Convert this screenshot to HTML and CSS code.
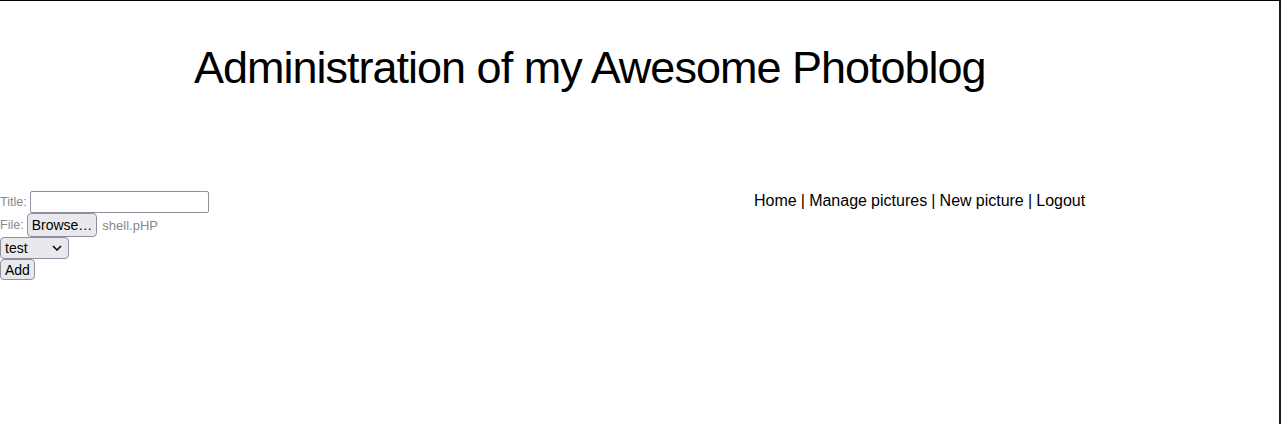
FILE: index.html
```html
<!DOCTYPE html>
<html>
<head>
<meta charset="utf-8">
<title>Administration of my Awesome Photoblog</title>
<link rel="stylesheet" href="styles.css">
</head>
<body>
<div class="frame">
  <header class="header">
    <h1 class="title">Administration of my Awesome Photoblog</h1>
  </header>
  <div class="content">
    <form class="form">
      <div class="row row-title">
        <label class="label">Title:</label>
        <input class="text-input" type="text">
      </div>
      <div class="row row-file">
        <label class="label">File:</label>
        <span class="btn browse">Browse…</span>
        <span class="filename">shell.pHP</span>
      </div>
      <div class="row row-select">
        <span class="select">test
          <svg class="chev" width="10" height="6" viewBox="0 0 10 6"><path d="M1 1 L5 5 L9 1" fill="none" stroke="#000" stroke-width="1.5"/></svg>
        </span>
      </div>
      <div class="row row-add">
        <span class="btn add">Add</span>
      </div>
    </form>
    <nav class="nav"><a class="nav-link">Home</a> | <a class="nav-link">Manage pictures</a> | <a class="nav-link">New picture</a> | <a class="nav-link">Logout</a></nav>
  </div>
</div>
</body>
</html>
```

FILE: styles.css
```css
html, body {
  margin: 0;
  padding: 0;
  height: 100%;
  background: #fff;
}
.frame {
  box-sizing: border-box;
  height: 424px;
  width: 1281px;
  border-top: 1px solid #000;
  border-right: 2px solid #1c1c24;
  font-family: "Liberation Sans", Arial, sans-serif;
}
.header {
  padding-left: 194px;
  padding-top: 41px;
  height: 150px;
  box-sizing: border-box;
}
.title {
  margin: 0;
  font-weight: normal;
  font-size: 45px;
  line-height: 52px;
  letter-spacing: -1px;
  color: #000;
}
.content {
  display: flex;
  padding-top: 40px;
}
.form {
  width: 754px;
  display: flex;
  flex-direction: column;
}
.row {
  display: flex;
  align-items: center;
}
.row-title { height: 22px; }
.row-file { height: 24px; }
.row-select { height: 22px; }
.row-add { height: 21px; }
.label {
  font-size: 12.5px;
  color: #888;
  margin-right: 3px;
}
.text-input {
  box-sizing: border-box;
  width: 179px;
  height: 22px;
  border: 1px solid #8f8f9d;
  border-radius: 2px;
  padding: 0;
  margin: 0;
}
.btn {
  box-sizing: border-box;
  display: inline-flex;
  align-items: center;
  background: #e9e9ed;
  border: 1px solid #8f8f9d;
  border-radius: 4px;
  font-size: 14px;
  color: #000;
}
.browse {
  height: 24px;
  padding: 0 4px;
}
.filename {
  font-size: 13px;
  color: #888;
  margin-left: 5px;
}
.select {
  box-sizing: border-box;
  display: inline-flex;
  align-items: center;
  justify-content: space-between;
  width: 69px;
  height: 22px;
  padding: 0 6px 0 4px;
  background: #e9e9ed;
  border: 1px solid #8f8f9d;
  border-radius: 4px;
  font-size: 14px;
}
.add {
  height: 21px;
  padding: 0 4px;
}
.nav {
  font-size: 16px;
  line-height: 18px;
  color: #000;
  padding-top: 1px;
  word-spacing: -0.3px;
}
.nav-link {
  color: #000;
}
```
